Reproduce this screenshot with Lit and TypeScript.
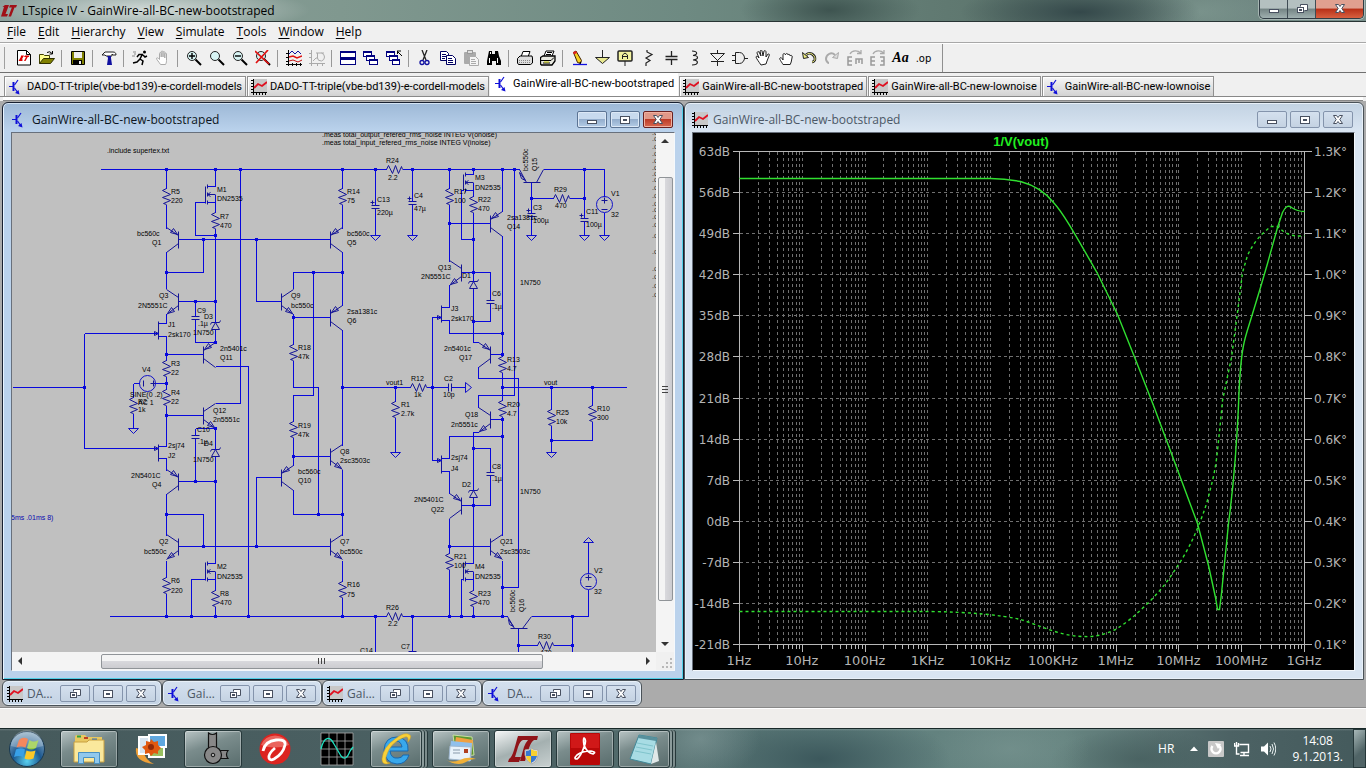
import { LitElement, html, svg, css } from "lit";
import { customElement, property } from "lit/decorators.js";
import { classMap } from "lit/directives/class-map.js";

/* ---------- small shared glyphs ---------- */

const bjtIcon = html`<svg width="16" height="16" viewBox="0 0 16 16" aria-hidden="true">
  <path d="M1 7.500h4M10 1L6.500 6M6.500 9l3.500 5" stroke="#1010d8" stroke-width="1.200" fill="none" />
  <path d="M5.500 3v9" stroke="#1010d8" stroke-width="2" />
  <path d="M11.500 15.500l-4.500-1.500 3.500-3z" fill="#1010d8" />
</svg>`;

const waveIcon = html`<svg width="16" height="16" viewBox="0 0 16 16" aria-hidden="true">
  <rect x="2" width="14" height="13" fill="#c8c8c8" />
  <path d="M2.500 0v16M0 13.500h16M0 1.500h2M0 4.500h2M0 7.500h2M0 10.500h2M5.500 13v3M8.500 13v3M11.500 13v3M14.500 13v3" stroke="#000" fill="none" />
  <path d="M3 9l4-4 4 2 5-4" stroke="#e01020" stroke-width="1.800" fill="none" />
</svg>`;

const ltLogo = html`<svg width="16" height="12" viewBox="0 0 16 12" aria-hidden="true">
  <path d="M4 0h4L4.500 9H7l-1 2.500H0L3 2H1.500z" fill="#a01018" /><path d="M9 0h7l-1 2.500h-1.500L10 11.500H7.500L10.800 2.500H8z" fill="#a01018" />
</svg>`;

const capIcons: Record<string, unknown> = {
  Minimize: svg`<rect x="3.500" y="6.500" width="9" height="3" />`,
  Maximize: svg`<rect x="3.500" y="2.500" width="9" height="7" /><rect x="6.500" y="5.500" width="3" height="1" />`,
  Restore: svg`<path d="M6.500 3.500v-2h7v6h-3" /><rect x="3.500" y="4.500" width="6" height="5" /><rect x="5.500" y="6.500" width="2" height="1" />`,
  Close: svg`<path d="M3.500 1.500h3L8 3.500l1.500-2h3L9.800 5.500l2.700 4h-3L8 7.500l-1.500 2h-3L6.200 5.500z" />`,
};
const cap = (name: string) => html`<svg width="16" height="12" viewBox="0 0 16 12" aria-hidden="true">
  <g fill="#fff" stroke="#485060">${capIcons[name]}</g>
</svg>`;

/* ---------- toolbar glyphs, each on a 16 by 16 grid ---------- */

const lens = (inner: unknown) => svg`<circle cx="6" cy="6" r="4.500" fill="#d8f4f4" stroke="#222" />
  <path d="M9.500 9.500l5.500 5.500" stroke="#000" stroke-width="2" />${inner}`;
const hand = (col: string) => svg`<path d="M5.500 14.500C4 12 1.500 9.500 1.500 8.500s1.500-1 3 1V3.500c0-1.300 1.700-1.300 1.700 0V7 2c0-1.300 1.800-1.300 1.800 0v5-4.500c0-1.300 1.800-1.300 1.800 0V8 4c0-1.200 1.700-1.200 1.700 0v6.500c0 2-.5 3-1 4z" fill="#fff" stroke="${col}" />`;
const win = (x: number, y: number, w: number, h: number) => svg`<rect x="${x + 0.5}" y="${y + 0.5}" width="${w}" height="${h}" fill="#fff" stroke="#000080" /><path d="M${x} ${y + 1}h${w + 1}" stroke="#000080" stroke-width="2" />`;

const glyphs: Record<string, unknown> = {
  New: svg`<path d="M1.500.5h9l4 4v10.500h-13z" fill="#fff" stroke="#000" /><path d="M10.500.5v4h4" fill="none" stroke="#000" /><path d="M5 5.500h3L5.800 9.500H7l-.8 1.500H2.500L4.800 7zM9 5.500h4.500l-.8 1.500h-1L9.500 11H8l2-4H8z" fill="#e00000" />`,
  Open: svg`<path d="M.5 13.500v-9h4l1 1h5v3" fill="#ffff90" stroke="#404000" /><path d="M.5 13.500l4-5h11l-4 5z" fill="#808000" stroke="#303000" /><path d="M8 2.500q3-2 5 1M13.500 1v3h-3" fill="none" stroke="#000" />`,
  Save: svg`<path d="M1.500 1.500h13v13h-13z" fill="#808000" stroke="#000" /><path d="M4 2h8v6H4z" fill="#eee" /><path d="M3 10h9v4.500H3z" fill="#000" /><path d="M9 11h2v3H9z" fill="#eee" />`,
  "Control Panel": svg`<path d="M1 5l3-3h8c2 0 3 1 3 3h-3l-1-1v2H5l-1-1z" fill="#fff" stroke="#222" /><path d="M6 6h4v2l1 7H6l1-7z" fill="#1010a0" />`,
  Run: svg`<circle cx="12.500" cy="2" r="1.500" /><path d="M10.500 4L8 9l3 2-1 4M8 9l-3 3-4 1M11 4.500H7L5 7M11 5l2 2 2-1" fill="none" stroke="#000" stroke-width="1.500" /><path d="M1 2h3M2 4h2M0 6h3" stroke="#888" />`,
  Halt: hand("#aaa"),
  "Zoom in": lens(svg`<path d="M3 6h6M6 3v6" stroke="#000" stroke-width="1.400" />`),
  "Pan": lens(""),
  "Zoom back": lens(svg`<path d="M3 6h6" stroke="#000" stroke-width="1.400" />`),
  "Zoom to fit": lens(svg`<path d="M0 1l14 13M13 0L1 13" stroke="#e01010" stroke-width="1.700" />`),
  "Autorange": svg`<path d="M2.500 0v16M0 14.500h16M0 3.500h2M0 7.500h2M0 11.500h2M6.500 13v3M10.500 13v3M14.500 13v3" stroke="#000" /><path d="M3 4l3-3 3 3 3-3 3 3" fill="none" stroke="#1010a0" /><path d="M3 7l4-1 4 2 5-2" fill="none" stroke="#e01010" stroke-width="1.400" /><path d="M3 11l4-1 5 2 4-2" fill="none" stroke="#c01010" />`,
  "Plot settings": svg`<path d="M2.500 0v16M0 13.500h16M0 3.500h2M0 7.500h2M8.500 13v3M13.500 13v3" stroke="#aaa" /><path d="M4 11l3-3h2M7 3h8M8.500 3v5q0 3 4 3 3-1 3-4t-3-4" fill="none" stroke="#aaa" />`,
  "Tile windows": svg`${win(0, 1, 15, 6)}${win(0, 8, 15, 6)}`,
  "Cascade windows": svg`${win(0, 1, 8, 5)}${win(3, 5, 8, 5)}${win(6, 9, 8, 5)}`,
  "Close all": svg`${win(0, 1, 8, 5)}${win(3, 5, 8, 5)}${win(6, 9, 7, 5)}<path d="M11 1h4M11.500 1v3M11 1l5 5" stroke="#000" />`,
  Cut: svg`<path d="M5 0l4 10M10 0L6 10" stroke="#222" stroke-width="1.300" /><circle cx="5" cy="12.500" r="2" fill="none" stroke="#1010a0" stroke-width="1.300" /><circle cx="10" cy="12.500" r="2" fill="none" stroke="#1010a0" stroke-width="1.300" />`,
  Copy: svg`<path d="M.5 1.500h6l2 2v7h-8z" fill="#fff" stroke="#000060" /><path d="M2 4.500h4M2 6.500h4M2 8.500h3" stroke="#000060" /><path d="M6.500 5.500h6l3 3v6h-9z" fill="#fff" stroke="#000060" /><path d="M8 8.500h4M8 10.500h5M8 12.500h5" stroke="#000060" />`,
  Paste: svg`<rect x="1" y="2" width="12" height="12" rx="1" fill="#aaa" /><rect x="4.500" y=".5" width="5" height="3" fill="#ddd" stroke="#999" /><path d="M6.500 6.500h6l3 3v6h-9z" fill="#f4f4f4" stroke="#aaa" /><path d="M8 9.500h4M8 11.500h5M8 13.500h5" stroke="#aaa" />`,
  Find: svg`<path d="M3 1h3v3h3V1h3l1 5 2 5v4h-5v-4H6v4H1v-4l1-5z" fill="#000" /><path d="M3.500 8v5M11.500 8v5M4.500 2v2" stroke="#fff" />`,
  Print: svg`<path d="M4 7l2-5.500h7L11 7" fill="#fff" stroke="#000" /><path d="M.5 8.500L3 6h12l.5 2v5l-2 1.500H1.500L.5 13z" fill="#ddd" stroke="#000" /><path d="M2 10.500h12M2 12.500h12" stroke="#888" stroke-dasharray="1 1" />`,
  "Print setup": svg`<path d="M4 6l2-5h8l-2 5" fill="#fff" stroke="#000" /><path d="M7 2.500h5M6 4.500h5" stroke="#000" /><path d="M.5 7.500L3 6h12v5l-3 4H1.500l-1-1z" fill="#e8e8e0" stroke="#000" stroke-width="1.300" /><path d="M1 10.500h10l3-3M3 13h7" stroke="#000" fill="none" /><path d="M4 12h5" stroke="#cc0" />`,
  Wire: svg`<path d="M2.500 2.500L5 1l5.500 9.500-1 3-3-1z" fill="#f8d020" stroke="#402000" /><path d="M2 2l3-1 1 2-3 1.500z" fill="#e02020" /><path d="M8 13l2 1V11.500z" fill="#000" /><path d="M2 14.500h14" stroke="#1010e0" stroke-width="1.300" />`,
  Ground: svg`<path d="M8.500 0v7" stroke="#222" /><path d="M1.500 7.500h14l-7 6z" fill="#e8e890" stroke="#222" />`,
  "Label net": svg`<rect x="1" y="1" width="14" height="10" rx="1" fill="#f4f4a0" stroke="#222" stroke-width="1.500" /><path d="M5.500 9V5l2.500-2 2.500 2v4M5.500 6.500h5M8 11v5" stroke="#222" fill="none" />`,
  Resistor: svg`<path d="M7 0v2l5 2.500L6 8l4 2.500-4 2.500v3" stroke="#222" fill="none" stroke-width="1.200" />`,
  Capacitor: svg`<path d="M8.500 1v5M8.500 10v5M2.500 6.500h12M2.500 9.500h12" stroke="#222" stroke-width="1.300" />`,
  Inductor: svg`<path d="M6 1c6 0 6 4 1 4.500 6 0 6 4 0 4.500 6 0 6 5-1 5" stroke="#222" fill="none" stroke-width="1.200" />`,
  Diode: svg`<path d="M8.500 0v16M2 11.500h13" stroke="#222" /><path d="M1.500 3.500h14l-7 7z" fill="#eee" stroke="#222" />`,
  Component: svg`<path d="M0 5.500h4M0 10.500h4M12 8.500h4" stroke="#222" /><path d="M3.500 2.500h4c3 0 5 3 5 5.500s-2 5.500-5 5.500h-4z" fill="#eee" stroke="#222" />`,
  Move: svg`<path d="M6 15C4 12 1 8 1 7s2-1 3 1L2 3c0-1 1-2 2-1l2 4-1-5c1-1 2-1 2 0l1 5 1-5c1-1 2 0 2 1v5l2-3c1 0 2 0 1 2l-2 5-1 3z" fill="#fff" stroke="#222" />`,
  Drag: svg`<path d="M5 14.500C3 11 1 9 2 8s2 0 3 2V5c0-2 2-2 2.500 0C7.500 3 10 3 10 5c0-1 2.200-1 2.200 1 0-1 2.300-1 2 1l-1 5-1 2.500z" fill="#fff" stroke="#222" />`,
  Undo: svg`<path d="M5 5c4-4 9 0 9 4 0 2-2 3-3 3" fill="none" stroke="#222" stroke-width="2.600" /><path d="M5 5c4-4 9 0 9 4 0 2-2 3-3 3" fill="none" stroke="#eeee80" stroke-width="1" /><path d="M1.500 2.500l1 6 5-1z" fill="#eeee80" stroke="#222" />`,
  Redo: svg`<path d="M11 5C7 1 2 5 2 9c0 2 2 4 3 4" fill="none" stroke="#aaa" stroke-width="2" /><path d="M14.500 2.500l-1 6-5-1z" fill="#ddd" stroke="#aaa" />`,
  Rotate: svg`<path d="M3 4c2-4 8-4 10.500-1M14 0v3.500h-4" fill="none" stroke="#aaa" stroke-width="1.300" /><path d="M5 7H1v8h4M1 11h4M9 14V9h6v5M12 9v4" fill="none" stroke="#999" stroke-width="1.500" />`,
  Mirror: svg`<path d="M3 4c2-4 8-4 10.500-1M14 0v3.500h-4" fill="none" stroke="#aaa" stroke-width="1.300" /><path d="M5 7H1v8h4M1 11h4M10 7h4v8h-4M11 11h3" fill="none" stroke="#999" stroke-width="1.500" />`,
};

const toolGroups: string[][] = [
  ["New", "Open"],
  ["Save"],
  ["Control Panel"],
  ["Run", "Halt"],
  ["Zoom in", "Pan", "Zoom back", "Zoom to fit"],
  ["Autorange", "Plot settings"],
  ["Tile windows", "Cascade windows", "Close all"],
  ["Cut", "Copy", "Paste", "Find"],
  ["Print", "Print setup"],
  ["Wire", "Ground", "Label net", "Resistor", "Capacitor", "Inductor", "Diode", "Component", "Move", "Drag", "Undo", "Redo", "Rotate", "Mirror"],
];

/* ---------- schematic sheet ---------- */

type P = [number, number];

const wires = `
M100 169H386M402 169H519M543 169H604V196M109 616H386M402 616H507M531 616H588V589
M166 169V188M166 204V228M166 251V288M166 313V323H158M158 336H166V360M166 376V389M166 405V446H158M158 458H166V470M166 493V535M166 560V577M166 593V616
M178 239H330M203 239V272H166M178 301H215M195 301V316M195 319V342H215M215 301V322M215 329V342M166 354H203M215 366H248V616
M84 333H158M84 333V448H158M12 387H84M133 383H139M155 383H166M133 383V397M133 413V428
M215 169V186H207M207 202H215M215 194V212M215 228V301M205 202H195V235H215
M240 169V403H215M166 415H203M195 428H215M195 428V435M195 438V481M215 428V449M215 456V563H207M178 481H215
M166 514H203V546M178 546H330M207 579H215M215 571V590M215 606V616M205 579H191V616
M342 169V188M342 204V228M342 251V305M293 288V272H342M256 239V301H281M293 313V344M293 317H330M293 360V387H318V514M313 272V395H293V421M293 437V465M293 456H330M281 477H256V546M293 489V514H342M342 329V445M342 469V535M342 560V581M342 597V616
M342 387H410M426 387H448M451 387H465M395 387V401M395 417V452
M375 169V205M375 208V235M412 169V201M412 204V235M375 616V652M412 616V651
M449 169V188M449 204V261M449 223H490M449 284V307H441M441 320H449V333H502M461 272H490M441 317H432V460H441
M473 169V174H465M465 190H473M473 182V196M473 212V281M463 190H461V239H473M473 288V342H478M490 272V300M490 303V321H473
M502 169V211M502 235V356M490 354H502M514 169V395H478V407M478 366V378H518V587H502M502 372V400M502 416V535M490 419H502
M478 432H473V490M473 448H490V472M490 475V505H461M473 497V563H465M449 458V436H502M441 458H449M441 471H449V493M449 518V553M449 569V616M449 546H490M502 560V616
M465 579H473M473 571V590M473 606V616M463 579H461V616
M502 387H626M551 387V409M551 425V452M592 387V405M592 421V440H551
M531 182V213M531 216V235M531 198H553M569 198H584M584 169V218M584 221V235M604 212V235
M518 628V652M518 645H537M553 645H572M572 616V652M588 573V542`;

const symbols = `
M205 186V203M207 184V188M207 192V196M207 200V204M207 194H215M210 192L207 194L210 196
M205 562V580M207 561V565M207 569V573M207 577V581M207 571H215M210 569L207 571L210 573
M463 174V190M465 172V176M465 180V184M465 188V192M465 182H473M468 180L465 182L468 184
M463 562V580M465 561V565M465 569V573M465 577V581M465 571H473M468 569L465 571L468 573
M158 321V339M158 444V461M441 305V322M441 455V473
M154 331L158 333L154 335ZM154 446L158 448L154 450ZM437 315L441 317L437 319ZM437 458L441 460L437 462Z
M191 316H199M191 319H199M191 435H199M191 438H199M371 205H379M371 208H379M408 201H416M408 204H416M486 300H494M486 303H494M486 472H494M486 475H494M448 383V391M451 383V391M527 213H535M527 216H535M580 218H588M580 221H588M408 651H416
M370 202H374M372 200V204M407 198H411M409 196V200M526 210H530M528 208V212M579 215H583M581 213V217
M519 169L526 182M536 182L543 169M523 182H540M519 172L525 180L521 178Z
M507 616L514 628M522 628L531 616M510 628H527M508 619L513 626L509 624Z
M601 200H607M604 197V203M601 209H607M585 577H591M588 574V580M585 586H591M143 380V386M153 380V386M150 383H156`;

/* [base x, base y, side of collector/emitter, polarity] */
const bjts: [number, number, 1 | -1, "n" | "p"][] = [
  [178, 239, -1, "p"], [178, 301, -1, "n"], [203, 354, 1, "p"], [203, 415, 1, "n"], [178, 481, -1, "p"], [178, 546, -1, "n"],
  [330, 239, 1, "p"], [281, 301, 1, "n"], [330, 317, 1, "p"], [281, 477, 1, "p"], [330, 456, 1, "n"], [330, 546, 1, "n"],
  [490, 223, 1, "p"], [461, 272, -1, "n"], [490, 354, -1, "p"], [490, 419, -1, "n"], [461, 505, -1, "p"], [490, 546, 1, "n"],
];
const resV: P[] = [[166, 188], [166, 360], [166, 389], [133, 397], [166, 577], [215, 212], [215, 590], [342, 188], [293, 344], [293, 421], [342, 581], [395, 401], [449, 188], [473, 196], [502, 356], [502, 400], [449, 553], [473, 590], [551, 409], [592, 405]];
const resH: P[] = [[386, 169], [386, 616], [410, 387], [553, 198], [537, 645]];
const zeners: P[] = [[215, 322], [215, 449], [473, 281], [473, 490]];
const grounds: P[] = [[133, 428], [375, 235], [412, 235], [531, 235], [584, 235], [604, 235], [395, 452], [551, 452]];
const sources: P[] = [[147, 383], [604, 204], [588, 581]];
const dots: P[] = [
  [166, 169], [215, 169], [240, 169], [342, 169], [375, 169], [412, 169], [449, 169], [473, 169], [502, 169], [514, 169], [584, 169],
  [215, 235], [203, 239], [256, 239], [166, 272], [313, 272], [342, 272], [195, 301], [215, 301], [293, 317], [215, 342], [166, 354],
  [166, 383], [84, 387], [342, 387], [166, 415], [215, 428], [293, 456], [195, 481], [215, 481], [166, 514], [318, 514], [342, 514],
  [203, 546], [256, 546], [166, 616], [191, 616], [215, 616], [248, 616], [342, 616], [375, 616], [412, 616], [449, 616], [461, 616],
  [473, 616], [502, 616], [572, 616], [449, 223], [473, 239], [473, 272], [473, 321], [502, 333], [502, 354], [395, 387], [432, 387],
  [502, 387], [551, 387], [592, 387], [502, 419], [502, 436], [473, 448], [473, 505], [449, 546], [502, 587], [551, 440], [531, 198],
  [584, 198], [518, 645], [572, 645],
];
const labels: [number, number, string][] = [
  [322, 137, ".meas total_output_refered_rms_noise INTEG V(onoise)"], [322, 145, ".meas total_input_refered_rms_noise INTEG V(inoise)"],
  [107, 153, ".include supertex.txt"], [171, 194, "R5"], [171, 203, "220"], [217, 192, "M1"], [217, 201, "DN2535"], [220, 219, "R7"], [220, 228, "470"],
  [137, 236, "bc560c"], [152, 245, "Q1"], [159, 298, "Q3"], [138, 308, "2N5551C"], [197, 313, "C9"], [204, 319, "D3"], [198, 326, ".1µ"], [193, 335, "1N750"],
  [168, 327, "J1"], [168, 337, "2sk170"], [220, 351, "2n5401c"], [220, 360, "Q11"], [171, 366, "R3"], [171, 375, "22"], [142, 372, "V4"],
  [130, 397, "SINE(0 .2)"], [138, 404, "R2"], [138, 405, "AC 1"], [138, 412, "1k"], [171, 395, "R4"], [171, 404, "22"],
  [213, 413, "Q12"], [213, 422, "2n5551c"], [197, 432, "C10"], [198, 444, ".1µ"], [204, 446, "D4"], [193, 462, "1N750"], [168, 448, "2sj74"], [168, 458, "J2"],
  [131, 478, "2N5401C"], [152, 487, "Q4"], [159, 544, "Q2"], [144, 554, "bc550c"], [217, 569, "M2"], [217, 579, "DN2535"], [171, 583, "R6"], [171, 593, "220"],
  [220, 596, "R8"], [220, 605, "470"], [347, 194, "R14"], [347, 203, "75"], [347, 236, "bc560c"], [347, 245, "Q5"], [291, 298, "Q9"], [291, 308, "bc550c"],
  [347, 314, "2sa1381c"], [347, 323, "Q6"], [298, 350, "R18"], [298, 359, "47k"], [298, 428, "R19"], [298, 437, "47k"], [298, 474, "bc560c"], [298, 483, "Q10"],
  [340, 454, "Q8"], [340, 463, "2sc3503c"], [340, 544, "Q7"], [340, 554, "bc550c"], [347, 587, "R16"], [347, 597, "75"],
  [386, 163, "R24"], [388, 180, "2.2"], [386, 610, "R26"], [388, 626, "2.2"], [377, 202, "C13"], [377, 215, "220µ"], [414, 198, "C4"], [414, 211, "47µ"],
  [360, 653, "C14"], [401, 649, "C7"], [454, 194, "R17"], [454, 203, "100"], [475, 180, "M3"], [475, 190, "DN2535"], [478, 202, "R22"], [478, 211, "470"],
  [507, 220, "2sa1381c"], [507, 229, "Q14"], [533, 210, "C3"], [533, 223, "100µ"], [554, 192, "R29"], [555, 208, "470"], [586, 214, "C11"], [586, 227, "100µ"],
  [611, 196, "V1"], [611, 217, "32"], [438, 270, "Q13"], [421, 279, "2N5551C"], [462, 278, "D1"], [492, 296, "C6"], [492, 309, ".1µ"], [520, 285, "1N750"],
  [451, 311, "J3"], [451, 321, "2sk170"], [444, 351, "2n5401c"], [459, 360, "Q17"], [507, 362, "R13"], [507, 371, "4.7"], [386, 385, "vout1"], [411, 381, "R12"],
  [414, 397, "1k"], [444, 381, "C2"], [443, 397, "10p"], [544, 385, "vout"], [401, 407, "R1"], [401, 416, "2.7k"], [507, 407, "R20"], [507, 416, "4.7"],
  [465, 417, "Q18"], [451, 427, "2n5551c"], [556, 415, "R25"], [556, 424, "10k"], [597, 411, "R10"], [597, 420, "300"], [451, 460, "2sj74"], [451, 471, "J4"],
  [492, 469, "C8"], [492, 481, ".1µ"], [462, 487, "D2"], [520, 494, "1N750"], [414, 502, "2N5401C"], [431, 512, "Q22"], [500, 544, "Q21"], [500, 554, "2sc3503c"],
  [454, 559, "R21"], [454, 568, "100"], [475, 569, "M4"], [475, 579, "DN2535"], [478, 596, "R23"], [478, 605, "470"], [594, 573, "V2"], [594, 594, "32"],
  [538, 639, "R30"], [540, 655, "470"],
];
const upright: [number, number, string][] = [[528, 171, "bc550c"], [537, 171, "Q15"], [515, 612, "bc560c"], [524, 612, "Q16"]];
const edgeRows = [135, 141, 149, 156, 163, 170, 176, 182, 190, 198, 206, 212, 219, 227, 238, 254, 271, 279, 288, 297];

@customElement("schematic-sheet")
export class SchematicSheet extends LitElement {
  static styles = css`
    :host { display: block; overflow: hidden; background: #c0c0c0; min-width: 0; min-height: 0; }
    .sheet { display: block; }
    .line { fill: none; stroke: #0808dc; shape-rendering: crispEdges; }
    .sym { fill: none; stroke: #141496; }
    .port { fill: none; stroke: #1010c8; }
    .dot { fill: #0808dc; shape-rendering: crispEdges; }
    text { font: 7px "Liberation Sans", Arial, sans-serif; fill: #000; }
    .note { fill: #0808b0; }
    .edge { fill: #303030; }
  `;
  private bjt([x, y, d, kind]: (typeof bjts)[number]) {
    const e = x + 12 * d;
    const arrow = kind === "p" ? `M${x + d} ${y - 5}L${x + 8 * d} ${y - 7}L${x + 5 * d} ${y - 11}Z` : `M${x + 11 * d} ${y + 12}L${x + 4 * d} ${y + 10}L${x + 7 * d} ${y + 6}Z`;
    return svg`<path d="M${x} ${y - 8}V${y + 9}M${e} ${y - 12}L${x} ${y - 4}M${x} ${y + 4}L${e} ${y + 13}${arrow}" />`;
  }
  render() {
    return html`<svg class="sheet" width="644" height="519" viewBox="12 133 644 519" role="img" aria-label="Amplifier schematic">
      <g transform="translate(.5 .5)">
        <g class="sym">
          ${bjts.map((b) => this.bjt(b))}
          ${resV.map(([x, y]) => svg`<path d="M${x} ${y}l-4 2 8 4-8 3 8 3-7 3 3 1" />`)}
          ${resH.map(([x, y]) => svg`<path d="M${x} ${y}l2-4 4 8 3-8 3 8 3-7 1 3" />`)}
          ${zeners.map(([x, y]) => svg`<path d="M${x - 5} ${y + 2}l1-2h8l1-2M${x} ${y}l-4 7h8z" />`)}
          <path d="${symbols}" />
        </g>
        <g class="port">
          ${grounds.map(([x, y]) => svg`<path d="M${x - 5} ${y}h10l-5 5z" />`)}
          ${sources.map(([x, y]) => svg`<circle cx="${x}" cy="${y}" r="8" />`)}
          <path d="M465 382v10l6-5zM583 542h10l-5-5z" />
        </g>
        <path class="line" d="${wires}" />
      </g>
      ${dots.map(([x, y]) => svg`<rect class="dot" x="${x - 1}" y="${y - 1}" width="3" height="3" />`)}
      ${labels.map(([x, y, t]) => svg`<text x="${x}" y="${y}">${t}</text>`)}
      ${upright.map(([x, y, t]) => svg`<text transform="translate(${x} ${y}) rotate(-90)">${t}</text>`)}
      ${edgeRows.map((y) => svg`<text class="edge" x="652" y="${y}">.c</text>`)}
      <text class="note" x="11" y="520">5ms .01ms 8)</text>
    </svg>`;
  }
}

/* ---------- waveform plot ---------- */

const DEC = 565 / 9;
const STEP = 493 / 12;

@customElement("bode-plot")
export class BodePlot extends LitElement {
  static styles = css`
    :host { display: block; background: #000; min-width: 0; min-height: 0; }
    .plot { display: block; width: 100%; height: 100%; }
    .axis { stroke: #b8b8b8; fill: none; shape-rendering: crispEdges; }
    .grid { stroke: #707070; stroke-dasharray: 3 3; fill: none; shape-rendering: crispEdges; }
    .trace { stroke: #30e030; fill: none; stroke-width: 1.4; }
    .phase { stroke-dasharray: 3 3; }
    text { font: 12px "DejaVu Sans", sans-serif; fill: #b4b4b4; }
    .left { text-anchor: end; }
    .bottom { font-size: 13px; text-anchor: middle; }
    .name { font: bold 13px "Liberation Sans", sans-serif; fill: #20f020; text-anchor: middle; }
  `;
  render() {
    const rows = Array.from({ length: 13 }, (_, i) => Math.round(151 + STEP * i));
    const minor: number[] = [];
    for (let d = 0; d < 9; d++) for (let k = 2; k <= 10; k++) minor.push(Math.round(739 + DEC * (d + Math.log10(k))));
    const hz = ["1Hz", "10Hz", "100Hz", "1KHz", "10KHz", "100KHz", "1MHz", "10MHz", "100MHz", "1GHz"];
    return html`<svg class="plot" viewBox="693 133 661 537" role="img" aria-label="Plot of 1/V(vout)">
      <g transform="translate(.5 .5)">
        <path class="grid" d="${minor.map((x) => `M${x} 151V644`).join("") + rows.map((y) => `M739 ${y}H1304`).join("")}" />
        <path class="axis" d="${"M739 151H1304V644H739Z" + rows.map((y) => `M732 ${y}h7M1304 ${y}h7`).join("") + minor.map((x, i) => `M${x} 644v${i % 9 === 8 ? 7 : 4}`).join("") + "M739 644v7"}" />
        <path class="trace" d="M739 178H990Q1005 178 1020 181C1035 185 1045 192 1053 202C1063 213 1073 231 1097 273L1117 314L1135 359L1153 405L1178 472L1197 523L1208 565L1215 597L1217 609H1219L1221 593L1228 523C1233 485 1236 450 1238 405C1239 375 1240 360 1243 345C1245 334 1248 327 1253 310L1260 287L1267 263L1277 227L1282 212Q1286 203 1291 207Q1297 211 1304 211" />
        <path class="trace phase" d="M739 611H930Q990 612 1020 619C1040 625 1060 636 1084 636Q1098 637 1115 629Q1130 620 1147 603Q1163 588 1178 564Q1190 546 1198 525Q1206 506 1210 488Q1215 470 1217 450Q1220 422 1222 400L1231 357L1237 312L1242 272L1247 255Q1252 244 1260 235L1270 226H1277L1283 231Q1292 237 1304 235" />
      </g>
      <text class="name" x="1021" y="146">1/V(vout)</text>
      ${rows.map((y, i) => svg`<text class="left" x="730" y="${y + 5}">${63 - 7 * i}dB</text><text x="1314" y="${y + 5}">${(1.3 - i / 10).toFixed(1)}K°</text>`)}
      ${hz.map((t, i) => svg`<text class="bottom" x="${739 + DEC * i}" y="665">${t}</text>`)}
    </svg>`;
  }
}

/* ---------- child windows ---------- */

@customElement("child-window")
export class ChildWindow extends LitElement {
  @property() caption = "";
  @property() kind: "bjt" | "wave" = "bjt";
  @property({ type: Boolean, reflect: true }) active = false;
  @property({ type: Boolean, reflect: true }) minimized = false;
  static styles = css`
    :host {
      display: flex; flex-direction: column; box-sizing: border-box; min-width: 0; min-height: 0;
      border: 1px solid #4a5258; border-radius: 6px 6px 0 0; padding: 0 8px 8px 7px;
      background: linear-gradient(#c2d2e2, #d9e5f2 28px); box-shadow: inset 0 0 0 1px #e8f0f8;
    }
    :host([active]) { padding-left: 8px; border-color: #182030; background: linear-gradient(#9db8d6, #bad2ec 28px); box-shadow: inset 0 1px #d4e4f4, inset 1px 0 #e8f4ff, inset -1px -1px #50d0e8; }
    :host([minimized]) { padding: 0 5px 0 4px; border-radius: 6px; width: 160px; background: linear-gradient(#d4e0ee, #c4d3e4); }
    .bar { display: flex; align-items: center; gap: 3px; height: 29px; padding: 4px 2px 0 0; box-sizing: border-box; flex: none; }
    :host([minimized]) .bar { height: 25px; padding: 0; }
    .icon { display: flex; width: 16px; margin-right: 2px; }
    :host([minimized]) .icon { margin-right: 1px; }
    .caption { flex: 1; font: 12px/16px "Open Sans", "Noto Sans", sans-serif; color: #4c5866; white-space: nowrap; overflow: hidden; text-overflow: ellipsis; }
    :host([active]) .caption { color: #0c1420; }
    button { width: 30px; height: 17px; padding: 0; border: 1px solid #8494ac; border-radius: 2px; background: linear-gradient(#d4e0ee, #c4d2e2); display: grid; place-items: center; }
    :host([active]) button { border-color: #5c7494; background: linear-gradient(#c8daee 45%, #94aecd 50%, #b4cce6); box-shadow: inset 0 0 0 1px #dce8f6; }
    :host([active]) .close { border-color: #682020; background: linear-gradient(#e09888 45%, #bc3c28 50%, #d86850); box-shadow: inset 0 0 0 1px #f0b0a0; }
    .client { flex: 1; display: grid; min-height: 0; border: 1px solid; border-color: #68707c #f4f8fc #f4f8fc #68707c; background: #f0f0f0; }
    :host([minimized]) .client { display: none; }
  `;
  render() {
    const buttons = [this.minimized ? "Restore" : "Minimize", "Maximize", "Close"];
    return html`<header class="bar">
        <span class="icon">${this.kind === "bjt" ? bjtIcon : waveIcon}</span>
        <span class="caption">${this.caption}</span>
        ${buttons.map((b) => html`<button class=${b.toLowerCase()} aria-label=${b}>${cap(b)}</button>`)}
      </header>
      <div class="client"><slot></slot></div>`;
  }
}

/* ---------- taskbar ---------- */

const orb = html`<svg width="40" height="40" viewBox="0 0 40 40" aria-hidden="true">
  <defs><radialGradient id="o" cx=".5" cy=".85" r=".8"><stop offset="0" stop-color="#58d0f0" /><stop offset=".5" stop-color="#1c5890" /><stop offset="1" stop-color="#88a8c0" /></radialGradient></defs>
  <circle cx="20" cy="20" r="17.500" fill="url(#o)" stroke="#183850" />
  <path d="M12 11q4-4 9-1l-2.500 8.500q-5-2-9 0z" fill="#f06028" /><path d="M22.500 11q4 3 9 0l-2.500 8q-5 3-9 0z" fill="#90c838" />
  <path d="M9 20.500q5-2.500 9 0L16 28q-4-2-9 0z" fill="#38a0e8" /><path d="M19.500 21.500q4 2 9 0l-2 8q-5 2-9 0z" fill="#fcc828" />
  <path d="M4 17a16 16 0 0 1 32 0q-16 5-32 0z" fill="#fff" opacity=".25" />
</svg>`;

const app = (body: unknown) => html`<svg width="34" height="34" viewBox="0 0 34 34" aria-hidden="true">${body}</svg>`;
const apps: { name: string; open: boolean; on?: boolean; stack?: boolean; icon: unknown }[] = [
  { name: "Windows Explorer", open: true, icon: app(svg`<path d="M3 5q0-2 2-2h8l2 2h15v22H3z" fill="#e8c860" /><path d="M5 4.500h4" stroke="#30a040" stroke-width="2" /><path d="M12 6h4" stroke="#c04020" stroke-width="2" /><path d="M20 7.500h5" stroke="#3070c0" stroke-width="2" /><path d="M2 10h13l2-2h15v22H2z" fill="#fae89c" stroke="#c8a040" /><path d="M6.500 31.500V20.500h21v11h-5v-6h-11v6z" fill="#90c8ec" stroke="#4890c0" />`) },
  { name: "Photo Gallery", open: false, icon: app(svg`<path d="M2 16q-2 14 18 16-9-4-11-14z" fill="#f0a038" /><rect x="5" y="5" width="14" height="17" fill="#d8e4f0" stroke="#fff" stroke-width="2" /><rect x="15" y="3" width="17" height="12" fill="#60a8e0" stroke="#fff" stroke-width="2" /><rect x="15" y="15" width="15" height="10" fill="#98c060" stroke="#fff" stroke-width="2" /><path d="M17 7l3 3 4-1v4l3 3-3 3v3l-4-1-3 3-2-3-4 1V18l-3-3 4-2V9l4 1z" fill="#e05810" /><circle cx="17" cy="15" r="3" fill="#902808" />`) },
  { name: "Pipe tool", open: true, icon: app(svg`<path d="M12.500 1q4 3 8 0v17h-8zM20 18.500h12q-3 4 0 8H20z" fill="#888" stroke="#111" stroke-width="1.200" /><circle cx="17" cy="23" r="8.500" fill="#888" stroke="#111" stroke-width="1.200" /><circle cx="17" cy="23" r="1.800" fill="#aaa" stroke="#111" />`) },
  { name: "Security", open: false, icon: app(svg`<circle cx="17" cy="17" r="15.500" fill="#dc2420" /><path d="M3 13a15 15 0 0 1 28 0Q17 18 3 13z" fill="#f08078" opacity=".7" /><path d="M5 19Q7 9 18 8q10-1 9 5-2 9-11 14-4 2-5-1-1-4 6-10" fill="none" stroke="#fff" stroke-width="2.800" />`) },
  { name: "Sine generator", open: false, icon: app(svg`<rect x="1" y="1" width="32" height="32" /><path d="M1 1v32M9 1v32M17 1v32M25 1v32M33 1v32M1 1h32M1 9h32M1 17h32M1 25h32M1 33h32" stroke="#aaa" stroke-width=".8" /><path d="M1 17C4 4 10 4 14 12l7 12q5 6 9-5l3-4" stroke="#20e0c0" stroke-width="1.300" fill="none" />`) },
  { name: "Internet Explorer", open: true, stack: true, icon: app(svg`<path d="M29 19H11q1 8 8 7 4 0 5-3h6q-3 9-12 9-12-1-13-14Q6 5 18 5q12 1 11 14zm-6-4q-1-6-6-6t-6 6z" fill="#38a8ec" stroke="#1868b0" /><path d="M31 3q-5-4-15 4Q4 15 3 27q0 7 8 4-5 0-4-6Q11 10 26 5q4-1 3 5 4-5 2-7z" fill="#f8d038" stroke="#d8a018" stroke-width=".5" />`) },
  { name: "Mail", open: true, icon: app(svg`<path d="M9 3l19 2 2 18-18 2z" fill="#5c9830" stroke="#c8e0a0" /><path d="M12 5l17 3-2 17-18-2z" fill="#f0a040" /><path d="M7 9l21 2-1 18-22-3z" fill="#90c0ec" /><path d="M6 14l21 1-1 14-21-2z" fill="#e8f2fa" stroke="#a0b8d0" /><path d="M20 17h4v4h-4z" fill="#b04020" /><path d="M9 18h7M9 21h7" stroke="#89a" /><path d="M2 28q6 3 14 0 8-4 16-1-6 0-10 3-8 5-20-2z" fill="#f0b038" />`) },
  { name: "LTspice IV", open: true, on: true, icon: app(svg`<path d="M12 4h20l-1 4h-3q-3 2-5 8l-4 13h-5l4-14q2-5 4-7h-5q-3 1-5 7L9 25h6l-2 5H2l1-3q3-2 5-9l2-7q1-4 2-7z" fill="#901418" /><path d="M19 18q4 0 6-2 2 2 7 2 1 11-6 14-8-3-7-14z" fill="#e8e8e8" stroke="#aaa" /><path d="M20 19q3 0 5-2v7h-5zM25 24h6q-1 5-6 7z" fill="#3878d0" /><path d="M25 17q3 2 6 2v5h-6zM20 24h5v7q-4-2-5-7z" fill="#f8d030" />`) },
  { name: "Adobe Reader", open: true, icon: app(svg`<rect x="2" y="1" width="30" height="32" rx="1" fill="#b80808" /><path d="M3 2h28v14H3z" fill="#d01818" /><path d="M16 6q3 2 0 9-3 9-7 12-4 0 0-4 5-4 14-4 6 1 2 3-6-1-9-9-1-6 0-7z" fill="none" stroke="#fff" stroke-width="1.700" />`) },
  { name: "Notepad", open: true, stack: true, icon: app(svg`<path d="M12 3l18 3-6 26L3 27z" fill="#a8dce4" stroke="#408898" /><path d="M12 3l18 3-1 3L11 6z" fill="#58909c" /><path d="M24 32l5-22 3 19z" fill="#e0e8e8" /><path d="M10 11l16 3M9 15l16 3M8 19l16 3" stroke="#80c4cc" />`) },
];

@customElement("task-bar")
export class TaskBar extends LitElement {
  static styles = css`
    :host {
      display: flex; align-items: center; height: 40px; box-sizing: border-box; border-top: 1px solid #182828; color: #fff;
      background:
        linear-gradient(#ffffff30, transparent 2px),
        radial-gradient(60px 40px at 700px 10px, #88a0a088, transparent),
        radial-gradient(130px 50px at 820px 30px, #3c585c, transparent),
        radial-gradient(80px 40px at 1010px 20px, #7c989488, transparent),
        radial-gradient(90px 30px at 1140px 30px, #3c545488, transparent),
        linear-gradient(90deg, #465a5c, #4c6264 40%, #60807e 60%, #668480 78%, #4c6264 90%, #445a5c);
      font: 12px/16px "Open Sans", "Noto Sans", sans-serif;
    }
    button { border: 0; padding: 0; background: none; color: inherit; font: inherit; display: grid; place-items: center; }
    .start { width: 54px; height: 39px; margin-right: 4px; }
    .apps { display: flex; gap: 4px; flex: 1; padding-left: 2px; }
    .task { width: 58px; height: 38px; border-radius: 3px; box-sizing: border-box; }
    .open { border: 1px solid #26383a; background: linear-gradient(160deg, #b8c4c4, #7a8c8c 40%, #586c6c); box-shadow: inset 0 0 0 1px #ffffff58; }
    .on { background: linear-gradient(160deg, #f4f6f6, #a4b0b0 50%, #c8d0d0); }
    .stack { width: 52px; margin-right: 6px; box-shadow: inset 0 0 0 1px #ffffff58, 2px 0 #8c9c9c, 3px 0 #26383a, 5px 0 #7c8c8c, 6px 0 #26383a; }
    .tray { display: flex; align-items: center; gap: 10px; }
    .lang { margin-right: 6px; }
    .clock { text-align: center; margin: 0 10px 0 6px; }
    .peek { width: 13px; height: 39px; border: 1px solid #26383a; box-sizing: border-box; background: linear-gradient(135deg, #a8b8b8, #506466 60%); }
  `;
  render() {
    return html`<button class="start" aria-label="Start">${orb}</button>
      <nav class="apps">
        ${apps.map((a) => html`<button class=${classMap({ task: true, open: a.open, on: !!a.on, stack: !!a.stack })} aria-label=${a.name}>${a.icon}</button>`)}
      </nav>
      <div class="tray">
        <span class="lang">HR</span>
        <svg width="8" height="5" viewBox="0 0 8 5" aria-hidden="true"><path d="M0 5l4-4.500L8 5z" fill="#fff" /></svg>
        <svg width="16" height="16" viewBox="0 0 16 16" aria-hidden="true"><rect width="16" height="16" rx="1" fill="#c8c8c8" /><path d="M4.500 5a4.500 4.500 0 1 0 7 0" stroke="#fff" stroke-width="2.500" fill="none" /><path d="M7 2l6 1-3 5z" fill="#fff" /></svg>
        <svg width="16" height="16" viewBox="0 0 16 16" aria-hidden="true"><path d="M5.500 3.500h9v8h-8M10 12v2M6 14.500h9M2.500 1v4M0.500 2v3h4V2M2.500 5v8h3" fill="none" stroke="#fff" stroke-width="1.400" /></svg>
        <svg width="16" height="16" viewBox="0 0 16 16" aria-hidden="true"><path d="M1 5.500h3l4-4v13l-4-4H1z" fill="#fff" /><path d="M10 5q2 3 0 6M12 3q3 5 0 10M14 1.500q3.500 6.500 0 13" stroke="#e8f0f0" fill="none" /></svg>
        <time class="clock">14:08<br />9.1.2013.</time>
      </div>
      <button class="peek" aria-label="Show desktop"></button>`;
  }
}

/* ---------- application frame ---------- */

const menus = ["File", "Edit", "Hierarchy", "View", "Simulate", "Tools", "Window", "Help"];
const tabs: { t: string; k: "bjt" | "wave"; on?: boolean }[] = [
  { t: "DADO-TT-triple(vbe-bd139)-e-cordell-models", k: "bjt" },
  { t: "DADO-TT-triple(vbe-bd139)-e-cordell-models", k: "wave" },
  { t: "GainWire-all-BC-new-bootstraped", k: "bjt", on: true },
  { t: "GainWire-all-BC-new-bootstraped", k: "wave" },
  { t: "GainWire-all-BC-new-lownoise", k: "wave" },
  { t: "GainWire-all-BC-new-lownoise", k: "bjt" },
];
const parked: { t: string; k: "bjt" | "wave" }[] = [
  { t: "DADO-TT-triple", k: "wave" },
  { t: "GainWire-all", k: "bjt" },
  { t: "GainWire-all", k: "wave" },
  { t: "DADO-TT-triple", k: "bjt" },
];

@customElement("app-root")
export class AppRoot extends LitElement {
  static styles = css`
    :host { display: flex; flex-direction: column; height: 100vh; overflow: hidden; background: #f0f0f0; color: #000; font: 12px/16px "Open Sans", "Noto Sans", sans-serif; }
    button { font: inherit; color: inherit; border: 0; padding: 0; background: none; }
    .title {
      display: flex; align-items: center; gap: 5px; height: 22px; flex: none; padding-left: 1px; box-sizing: border-box; border-bottom: 1px solid #283434;
      background:
        radial-gradient(160px 24px at 150px 10px, #ffffffa0, transparent),
        radial-gradient(90px 30px at 830px 10px, #3e5450, transparent),
        radial-gradient(120px 30px at 1080px 12px, #34484a, transparent),
        radial-gradient(70px 30px at 1200px 12px, #86a09888, transparent),
        linear-gradient(90deg, #8ba09c, #80988f 25%, #6e8a82 50%, #5c746c 75%, #78908c);
    }
    .title h1 { flex: 1; margin: 0; font: inherit; }
    .caps { display: flex; align-self: flex-start; margin-right: 2px; height: 18px; border: 1px solid #303c44; border-top: 0; border-radius: 0 0 5px 5px; overflow: hidden; box-shadow: 0 0 0 1px #ffffff60; }
    .caps button { width: 28px; display: grid; place-items: center; background: linear-gradient(#b4c0c0 45%, #748484 50%, #a0b0b0); border-right: 1px solid #404c54; }
    .caps .close { width: 47px; border-right: 0; background: linear-gradient(#e0a090 45%, #b83018 50%, #d86040); }
    .menus { display: flex; gap: 12px; height: 21px; flex: none; align-items: center; padding-left: 7px; border-bottom: 1px solid #a8a8a8; box-sizing: border-box; }
    .menus u { text-underline-offset: 2px; }
    .tools { display: flex; align-items: center; height: 30px; flex: none; border-bottom: 1px solid #707070; box-sizing: border-box; border-top: 1px solid #fff; }
    .grip { width: 4px; height: 22px; border-right: 1px solid #a0a0a0; margin-right: 7px; }
    .group { display: flex; }
    .tool { width: 23px; height: 22px; display: grid; place-items: center; }
    .sep { width: 1px; height: 17px; background: #989898; margin: 0 4px 0 3px; }
    .type { font: italic bold 14px "Liberation Serif", serif; }
    .op { font: 10px "DejaVu Sans", sans-serif; }
    .end { width: 1px; align-self: stretch; background: #909090; margin-left: 7px; }
    .tabs { display: flex; align-items: flex-end; gap: 1px; height: 24px; flex: none; padding: 0 4px; border-bottom: 1px solid #888; box-sizing: border-box; }
    .tab { display: flex; align-items: center; gap: 3px; height: 20px; padding: 0 3px; border: 1px solid #909090; border-bottom: 0; box-shadow: inset 1px 1px #fff; box-sizing: border-box; background: linear-gradient(#f6f6f6, #d2d2d2); font: 11px/14px Roboto, Arial, sans-serif; white-space: nowrap; }
    .tab.on { height: 23px; padding-bottom: 3px; background: #fff; border-color: #fff; }
    .tab svg { flex: none; }
    .strip { height: 3px; flex: none; background: #fff; border-bottom: 1px solid #888; margin: 0 3px; }
    .desk { flex: 1; min-height: 0; display: flex; flex-direction: column; padding: 1px 2px; background: #ababab; }
    .windows { flex: 1; min-height: 0; display: grid; grid-template-columns: minmax(0, 682fr) minmax(0, 680fr); }
    .scroller { display: grid; grid-template-columns: minmax(0, 1fr) 18px; grid-template-rows: minmax(0, 1fr) 18px; min-height: 0; min-width: 0; }
    .vbar { display: flex; flex-direction: column; align-items: center; background: #f4f4f4; }
    .hbar { display: flex; align-items: center; background: #f4f4f4; }
    .arrow { width: 16px; height: 16px; display: grid; place-items: center; flex: none; }
    .track { flex: 1; display: flex; min-height: 0; }
    .vbar .track { flex-direction: column; }
    .before { flex: 28; } .after { flex: 35; }
    .hbar .before { flex: 73; } .hbar .after { flex: 97; }
    .thumb { border: 1px solid #909498; border-radius: 2px; display: grid; place-items: center; box-sizing: border-box; }
    .vbar .thumb { flex: 423; width: 15px; background: linear-gradient(90deg, #f4f4f4 45%, #d8d8dc 50%, #ccccd0); }
    .hbar .thumb { flex: 442; height: 15px; background: linear-gradient(#f4f4f4 45%, #d8d8dc 50%, #ccccd0); }
    .parked { display: flex; height: 26px; flex: none; }
    .status { height: 20px; flex: none; border-top: 1px solid #888; box-shadow: inset 0 1px #fff; background: #f0eeec; }
  `;
  private arrow(d: string) {
    return html`<span class="arrow"><svg width="8" height="8" viewBox="0 0 8 8" aria-hidden="true"><path d="${d}" fill="#333" /></svg></span>`;
  }
  render() {
    return html`
      <header class="title">
        ${ltLogo}
        <h1>LTspice IV - GainWire-all-BC-new-bootstraped</h1>
        <div class="caps">
          <button aria-label="Minimize">${cap("Minimize")}</button>
          <button aria-label="Restore">${cap("Restore")}</button>
          <button class="close" aria-label="Close">${cap("Close")}</button>
        </div>
      </header>
      <nav class="menus">${menus.map((m) => html`<button><u>${m[0]}</u>${m.slice(1)}</button>`)}</nav>
      <div class="tools" role="toolbar" aria-label="Tools">
        <span class="grip"></span>
        ${toolGroups.map((g, i) => html`${i ? html`<span class="sep"></span>` : ""}
          <div class="group">
            ${g.map((n) => html`<button class="tool" aria-label=${n}><svg width="16" height="16" viewBox="0 0 16 16" aria-hidden="true">${glyphs[n]}</svg></button>`)}
          </div>`)}
        <button class="tool type">Aa</button>
        <button class="tool op">.op</button>
        <span class="end"></span>
      </div>
      <div class="tabs" role="tablist">
        ${tabs.map((t) => html`<button role="tab" aria-selected=${t.on ? "true" : "false"} class=${classMap({ tab: true, on: !!t.on })}>${t.k === "bjt" ? bjtIcon : waveIcon}<span>${t.t}</span></button>`)}
      </div>
      <div class="strip"></div>
      <main class="desk">
        <div class="windows">
          <child-window active caption="GainWire-all-BC-new-bootstraped" kind="bjt">
            <div class="scroller">
              <schematic-sheet></schematic-sheet>
              <div class="vbar">
                ${this.arrow("M0 6l4-4 4 4z")}
                <div class="track"><i class="before"></i><div class="thumb"><svg width="8" height="8" viewBox="0 0 8 8" aria-hidden="true"><path d="M1 1.500h6M1 4.500h6M1 7.500h6" stroke="#444" /></svg></div><i class="after"></i></div>
                ${this.arrow("M0 2l4 4 4-4z")}
              </div>
              <div class="hbar">
                ${this.arrow("M6 0l-4 4 4 4z")}
                <div class="track"><i class="before"></i><div class="thumb"><svg width="8" height="8" viewBox="0 0 8 8" aria-hidden="true"><path d="M.5 1v6M3.500 1v6M6.500 1v6" stroke="#444" /></svg></div><i class="after"></i></div>
                ${this.arrow("M2 0l4 4-4 4z")}
              </div>
              <svg width="18" height="18" viewBox="0 0 18 18" aria-hidden="true"><path d="M14 6h2v2h-2zM14 10h2v2h-2zM14 14h2v2h-2zM10 10h2v2h-2zM10 14h2v2h-2zM6 14h2v2H6z" fill="#b8b8b8" /></svg>
            </div>
          </child-window>
          <child-window caption="GainWire-all-BC-new-bootstraped" kind="wave"><bode-plot></bode-plot></child-window>
        </div>
        <div class="parked">${parked.map((p) => html`<child-window minimized caption=${p.t} kind=${p.k}></child-window>`)}</div>
      </main>
      <footer class="status"></footer>
      <task-bar></task-bar>
    `;
  }
}
